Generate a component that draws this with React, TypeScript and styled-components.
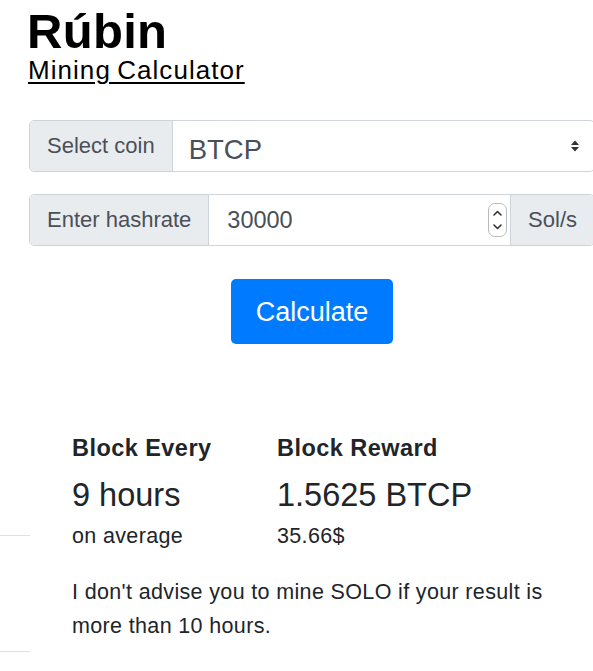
import React from "react"
import styled, { createGlobalStyle } from "styled-components"

const Global = createGlobalStyle`
  html, body {
    margin: 0;
    padding: 0;
    background: #fff;
    overflow-x: hidden;
  }
  body {
    font-family: "Liberation Sans", Arial, sans-serif;
    color: #212529;
  }
`

const S = {
  Page: styled.div`
    width: 593px;
    overflow: hidden;
  `,
  Header: styled.header`
    padding: 7px 0 0 27px;
  `,
  Title: styled.h1`
    margin: 0;
    font-size: 49px;
    line-height: 48px;
    font-weight: 700;
    color: #000;
    letter-spacing: 0.3px;
  `,
  SubTitle: styled.a`
    display: inline-block;
    margin-left: 1px;
    font-size: 26px;
    line-height: 30px;
    letter-spacing: 1.05px;
    word-spacing: -2px;
    color: #000;
    text-decoration: underline;
    text-underline-offset: 3px;
    text-decoration-thickness: 2px;
  `,
  Form: styled.form`
    width: 566px;
    margin: 35px 0 0 29px;
    display: flex;
    flex-direction: column;
    gap: 22px;
  `,
  Group: styled.div`
    display: flex;
    height: 52px;
    border: 1px solid #ced4da;
    border-radius: 5px;
    box-sizing: border-box;
    overflow: hidden;
  `,
  Addon: styled.div<{ $left?: boolean }>`
    display: flex;
    align-items: center;
    padding: 0 17px;
    background: #e9ecef;
    color: #495057;
    font-size: 22px;
    border-${(p) => (p.$left ? "right" : "left")}: 1px solid #ced4da;
  `,
  Select: styled.div`
    flex: 1;
    display: flex;
    align-items: center;
    justify-content: space-between;
    padding: 8px 14px 0 16px;
    font-size: 27.5px;
    color: #495057;
  `,
  Arrow: styled.span`
    display: flex;
    margin-top: -8px;
  `,
  Field: styled.div`
    flex: 1;
    display: flex;
    align-items: center;
    justify-content: space-between;
    padding: 0 3px 0 18px;
    font-size: 23.5px;
    color: #495057;
  `,
  Spinner: styled.div`
    width: 17px;
    height: 32px;
    border: 1px solid #b8bcc0;
    border-radius: 7px;
    background: #fff;
    display: flex;
    align-items: center;
    justify-content: center;
  `,
  Actions: styled.div`
    display: flex;
    justify-content: center;
    margin-top: 11px;
  `,
  Button: styled.button`
    width: 162px;
    height: 65px;
    border: none;
    border-radius: 5px;
    background: #007bff;
    color: #fff;
    font-family: "Liberation Sans", Arial, sans-serif;
    font-size: 27px;
    padding: 2px 0 0;
  `,
  Results: styled.section`
    display: flex;
    margin-top: 89px;
  `,
  Aside: styled.div`
    width: 30px;
    padding-top: 102px;
    display: flex;
    flex-direction: column;
    gap: 115px;
  `,
  Rule: styled.div`
    height: 1px;
    background: #dee2e6;
  `,
  Body: styled.div`
    margin-left: 42px;
  `,
  Stats: styled.div`
    display: grid;
    grid-template-columns: 205px auto;
  `,
  Stat: styled.div`
    display: flex;
    flex-direction: column;
  `,
  Label: styled.div`
    font-size: 23.5px;
    line-height: 30px;
    font-weight: 700;
    letter-spacing: 0.45px;
  `,
  Value: styled.div`
    margin-top: 12px;
    font-size: 32.5px;
    line-height: 40px;
  `,
  Note: styled.div`
    margin-top: 6px;
    font-size: 21.5px;
    line-height: 30px;
    letter-spacing: 0.35px;
  `,
  Advice: styled.p`
    margin: 24px 0 0;
    width: 490px;
    font-size: 21.5px;
    line-height: 34px;
    letter-spacing: 0.35px;
  `,
}

const SelectArrow = () => (
  <svg width="10" height="14" viewBox="0 0 10 14">
    <path d="M1 6 L5 1.5 L9 6 Z M1 8 L5 12.5 L9 8 Z" fill="#333" />
  </svg>
)

const SpinIcon = () => (
  <svg width="11" height="26" viewBox="0 0 11 26">
    <path
      d="M2 8 L5.5 4.5 L9 8 M2 18 L5.5 21.5 L9 18"
      stroke="#333"
      strokeWidth="1.6"
      fill="none"
      strokeLinecap="round"
      strokeLinejoin="round"
    />
  </svg>
)

const App: React.FC = () => {
  return (
    <S.Page>
      <Global />
      <S.Header>
        <S.Title>Rúbin</S.Title>
        <S.SubTitle href="#">Mining Calculator</S.SubTitle>
      </S.Header>
      <S.Form onSubmit={(e) => e.preventDefault()}>
        <S.Group>
          <S.Addon $left>Select coin</S.Addon>
          <S.Select>
            <span>BTCP</span>
            <S.Arrow>
              <SelectArrow />
            </S.Arrow>
          </S.Select>
        </S.Group>
        <S.Group>
          <S.Addon $left>Enter hashrate</S.Addon>
          <S.Field>
            <span>30000</span>
            <S.Spinner>
              <SpinIcon />
            </S.Spinner>
          </S.Field>
          <S.Addon>Sol/s</S.Addon>
        </S.Group>
        <S.Actions>
          <S.Button type="submit">Calculate</S.Button>
        </S.Actions>
      </S.Form>
      <S.Results>
        <S.Aside>
          <S.Rule />
          <S.Rule />
        </S.Aside>
        <S.Body>
          <S.Stats>
            <S.Stat>
              <S.Label>Block Every</S.Label>
              <S.Value>9 hours</S.Value>
              <S.Note>on average</S.Note>
            </S.Stat>
            <S.Stat>
              <S.Label>Block Reward</S.Label>
              <S.Value>1.5625 BTCP</S.Value>
              <S.Note>35.66$</S.Note>
            </S.Stat>
          </S.Stats>
          <S.Advice>
            I don't advise you to mine SOLO if your result is more than 10
            hours.
          </S.Advice>
        </S.Body>
      </S.Results>
    </S.Page>
  )
}

export default App
